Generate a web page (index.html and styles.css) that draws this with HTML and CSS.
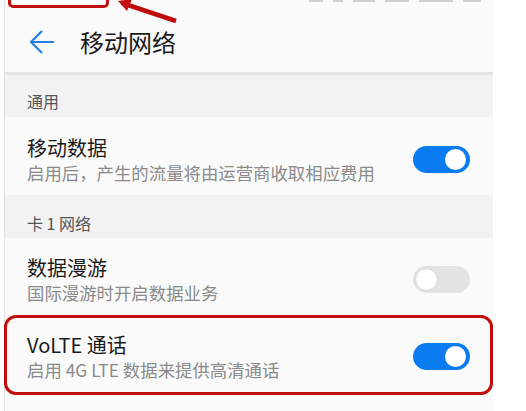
FILE: index.html
```html
<!DOCTYPE html>
<html lang="zh-CN">
<head>
  <meta charset="UTF-8" />
  <meta name="viewport" content="width=device-width, initial-scale=1.0"/>
  <title>移动网络</title>
  <link rel="stylesheet" href="styles.css">
</head>
<body>

  <div class="phone">
    <div class="topbar">
      <div class="status">
        <span class="bit w14"></span>
        <span class="bit w10"></span>
        <span class="bit w22"></span>
        <span class="bit w24"></span>
        <span class="bit w34"></span>
        <span class="bit w18"></span>
      </div>
      <div class="nav">
        <svg class="back" width="26" height="26" viewBox="0 0 26 26">
          <path d="M25 13H2M13 2L2 13l11 11" fill="none" stroke="#1f7fe8" stroke-width="2.2"/>
        </svg>
        <span class="nav-title">移动网络</span>
      </div>
    </div>
    <div class="shade"></div>

    <div class="group-title first">通用</div>
    <div class="row">
      <div class="text">
        <div class="title">移动数据</div>
        <div class="sub">启用后，产生的流量将由运营商收取相应费用</div>
      </div>
      <span class="toggle on"></span>
    </div>

    <div class="group-title">卡 1 网络</div>
    <div class="row">
      <div class="text">
        <div class="title">数据漫游</div>
        <div class="sub">国际漫游时开启数据业务</div>
      </div>
      <span class="toggle"></span>
    </div>
    <div class="row">
      <div class="text">
        <div class="title">VoLTE 通话</div>
        <div class="sub">启用 4G LTE 数据来提供高清通话</div>
      </div>
      <span class="toggle on"></span>
    </div>
  </div>

  <!-- annotations drawn over the screenshot -->
  <div class="mark mark-top"></div>
  <svg class="pointer" width="70" height="24" viewBox="0 0 70 24">
    <path d="M60 21L6 3" stroke="#c00d0d" stroke-width="4.5" fill="none"/>
    <path d="M2 1l14 -2 -5 12z" fill="#c00d0d"/>
  </svg>
  <div class="mark mark-volte"></div>

</body>
</html>
```

FILE: styles.css
```css
body {
  margin: 0;
  background: #fff;
  font-family: "Noto Sans CJK SC", "Noto Sans", sans-serif;
  position: relative;
  height: 411px;
  overflow: hidden;
}

.phone {
  margin-left: 4px;
  width: 488px;
  height: 411px;
  border-left: 1px solid #e2e2e2;
  background: #fafafa;
}

.topbar {
  height: 72px;
}

.status {
  height: 3px;
  display: flex;
  justify-content: flex-end;
  gap: 10px;
  padding-right: 12px;
}

.bit {
  height: 2px;
  background: #cfcfcf;
}

.w10 { width: 10px; }
.w14 { width: 14px; }
.w18 { width: 18px; }
.w22 { width: 22px; }
.w24 { width: 24px; }
.w34 { width: 34px; }

.nav {
  height: 60px;
  padding-top: 9px;
  display: flex;
  align-items: center;
}

.back {
  margin-left: 24px;
  flex-shrink: 0;
}

.nav-title {
  margin-left: 25px;
  font-size: 24px;
  color: #1a1a1a;
  line-height: 30px;
}

.shade {
  height: 3px;
  background: #e3e3e3;
}

.group-title {
  height: 43px;
  box-sizing: border-box;
  padding: 17px 0 0 22px;
  background: #f2f2f2;
  font-size: 16px;
  line-height: 22px;
  color: #555;
}

.group-title.first {
  height: 42px;
  padding-top: 15px;
}

.row {
  height: 77px;
  box-sizing: border-box;
  padding: 17px 23px 11px 22px;
  display: flex;
  align-items: center;
}

.group-title.first + .row {
  height: 78px;
  padding-top: 18px;
}

.text {
  flex: 1;
  align-self: flex-start;
}

.title {
  font-size: 20px;
  line-height: 26px;
  color: #1a1a1a;
}

.sub {
  font-size: 17.4px;
  line-height: 23px;
  color: #8a8a8a;
}

.toggle {
  position: relative;
  width: 57px;
  height: 27px;
  border-radius: 14px;
  background: #e3e3e3;
  flex-shrink: 0;
}

.toggle::after {
  content: "";
  position: absolute;
  top: 3px;
  left: 3px;
  width: 21px;
  height: 21px;
  border-radius: 50%;
  background: #fff;
  box-shadow: 0 0 2px rgba(0, 0, 0, 0.15);
}

.toggle.on {
  background: #0a7bf1;
}

.toggle.on::after {
  left: auto;
  right: 4px;
  box-shadow: none;
}

/* red annotation marks */
.mark {
  position: absolute;
  border: 3px solid #c00d0d;
  border-radius: 12px;
  box-sizing: border-box;
}

.mark-top {
  left: 8px;
  top: -12px;
  width: 101px;
  height: 20px;
  border-radius: 5px;
}

.mark-volte {
  left: 4px;
  top: 315px;
  width: 489px;
  height: 80px;
}

.pointer {
  position: absolute;
  left: 116px;
  top: 0;
}
```
